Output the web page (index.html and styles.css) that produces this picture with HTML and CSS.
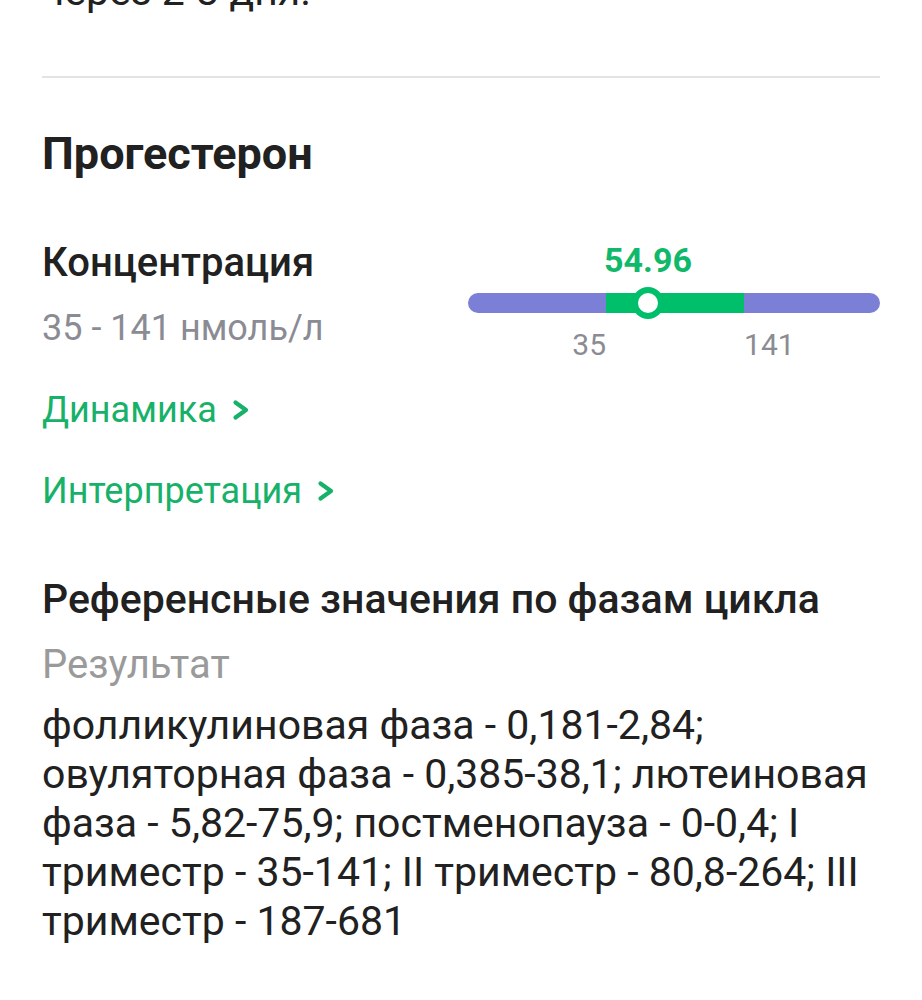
FILE: index.html
```html
<!DOCTYPE html>
<html lang="ru">
<head>
    <meta charset="UTF-8">
    <meta name="viewport" content="width=device-width, initial-scale=1.0">
    <title>Прогестерон</title>
    <link rel="stylesheet" href="styles.css">
</head>
<body>
    <div class="page">
        <p class="prev-note">через 2-3 дня.</p>
        <hr class="divider">

        <h1 class="test-title">Прогестерон</h1>

        <div class="measure-row">
            <div class="measure-info">
                <h2>Концентрация</h2>
                <div class="range-text">35 - 141 нмоль/л</div>
            </div>
            <div class="gauge">
                <div class="gauge-value" style="left: 43.7%">54.96</div>
                <div class="gauge-track">
                    <div class="gauge-norm" style="left: 33.5%; width: 33.5%"></div>
                    <div class="gauge-knob" style="left: 43.7%"></div>
                </div>
                <div class="gauge-labels">
                    <span class="gauge-min" style="left: 33.5%">35</span>
                    <span class="gauge-max" style="left: 67%">141</span>
                </div>
            </div>
        </div>

        <a class="more-link" href="#">Динамика
            <svg viewBox="0 0 18 22" width="18" height="22"><path d="M3.5 3.5l10.5 7.5-10.5 7.5" fill="none" stroke="currentColor" stroke-width="4.2" stroke-linecap="round" stroke-linejoin="round"/></svg>
        </a>
        <a class="more-link" href="#">Интерпретация
            <svg viewBox="0 0 18 22" width="18" height="22"><path d="M3.5 3.5l10.5 7.5-10.5 7.5" fill="none" stroke="currentColor" stroke-width="4.2" stroke-linecap="round" stroke-linejoin="round"/></svg>
        </a>

        <h3 class="ref-title">Референсные значения по фазам цикла</h3>
        <div class="ref-label">Результат</div>
        <p class="ref-text">фолликулиновая фаза - 0,181-2,84; овуляторная фаза - 0,385-38,1; лютеиновая фаза - 5,82-75,9; постменопауза - 0-0,4; I триместр - 35-141; II триместр - 80,8-264; III триместр - 187-681</p>
    </div>
</body>
</html>
```

FILE: styles.css
```css
body {
    margin: 0;
    background: #fff;
    font-family: Roboto, 'Noto Sans', sans-serif;
    color: #212121;
    overflow: hidden;
}

.page {
    padding: 0 42px;
}

.prev-note {
    margin: -33px 0 0;
    font-size: 41px;
    line-height: 49px;
}

.divider {
    border: none;
    height: 2px;
    background: #e3e3e3;
    margin: 60px 0 0;
}

.test-title {
    margin: 49px 0 0;
    font-size: 45px;
    font-weight: 700;
    line-height: 54px;
}

.measure-row {
    display: flex;
    justify-content: space-between;
    margin-top: 58px;
}

.measure-info h2 {
    margin: 0;
    font-size: 40px;
    font-weight: 500;
    line-height: 48px;
}

.range-text {
    margin-top: 19px;
    font-size: 36px;
    line-height: 44px;
    color: #8b8b94;
}

.gauge {
    position: relative;
    width: 412px;
    padding-top: 54px;
}

.gauge-value {
    position: absolute;
    top: 1px;
    transform: translateX(-50%);
    font-size: 34px;
    font-weight: 700;
    line-height: 40px;
    color: #10b96a;
}

.gauge-track {
    position: relative;
    height: 20px;
    border-radius: 10px;
    background: #7b80d6;
}

.gauge-norm {
    position: absolute;
    top: 0;
    bottom: 0;
    background: #00bf6b;
}

.gauge-knob {
    position: absolute;
    top: 50%;
    width: 20px;
    height: 20px;
    border: 6px solid #00bf6b;
    border-radius: 50%;
    background: #fff;
    transform: translate(-50%, -50%);
}

.gauge-labels {
    position: relative;
    height: 36px;
    margin-top: 14px;
}

.gauge-labels span {
    position: absolute;
    top: 0;
    font-size: 30px;
    line-height: 36px;
    color: #8b8b94;
}

.gauge-min {
    transform: translateX(-100%);
}

.more-link {
    display: flex;
    align-items: center;
    gap: 15px;
    width: max-content;
    margin-top: 25px;
    font-size: 36px;
    line-height: 44px;
    color: #17b169;
    text-decoration: none;
}

.more-link + .more-link {
    margin-top: 37px;
}

.ref-title {
    margin: 62px 0 0;
    font-size: 41px;
    font-weight: 500;
    line-height: 48px;
}

.ref-label {
    margin-top: 18px;
    font-size: 40px;
    line-height: 48px;
    color: #9a9a9a;
}

.ref-text {
    margin: 12px 0 0;
    font-size: 41px;
    line-height: 49px;
}
```
